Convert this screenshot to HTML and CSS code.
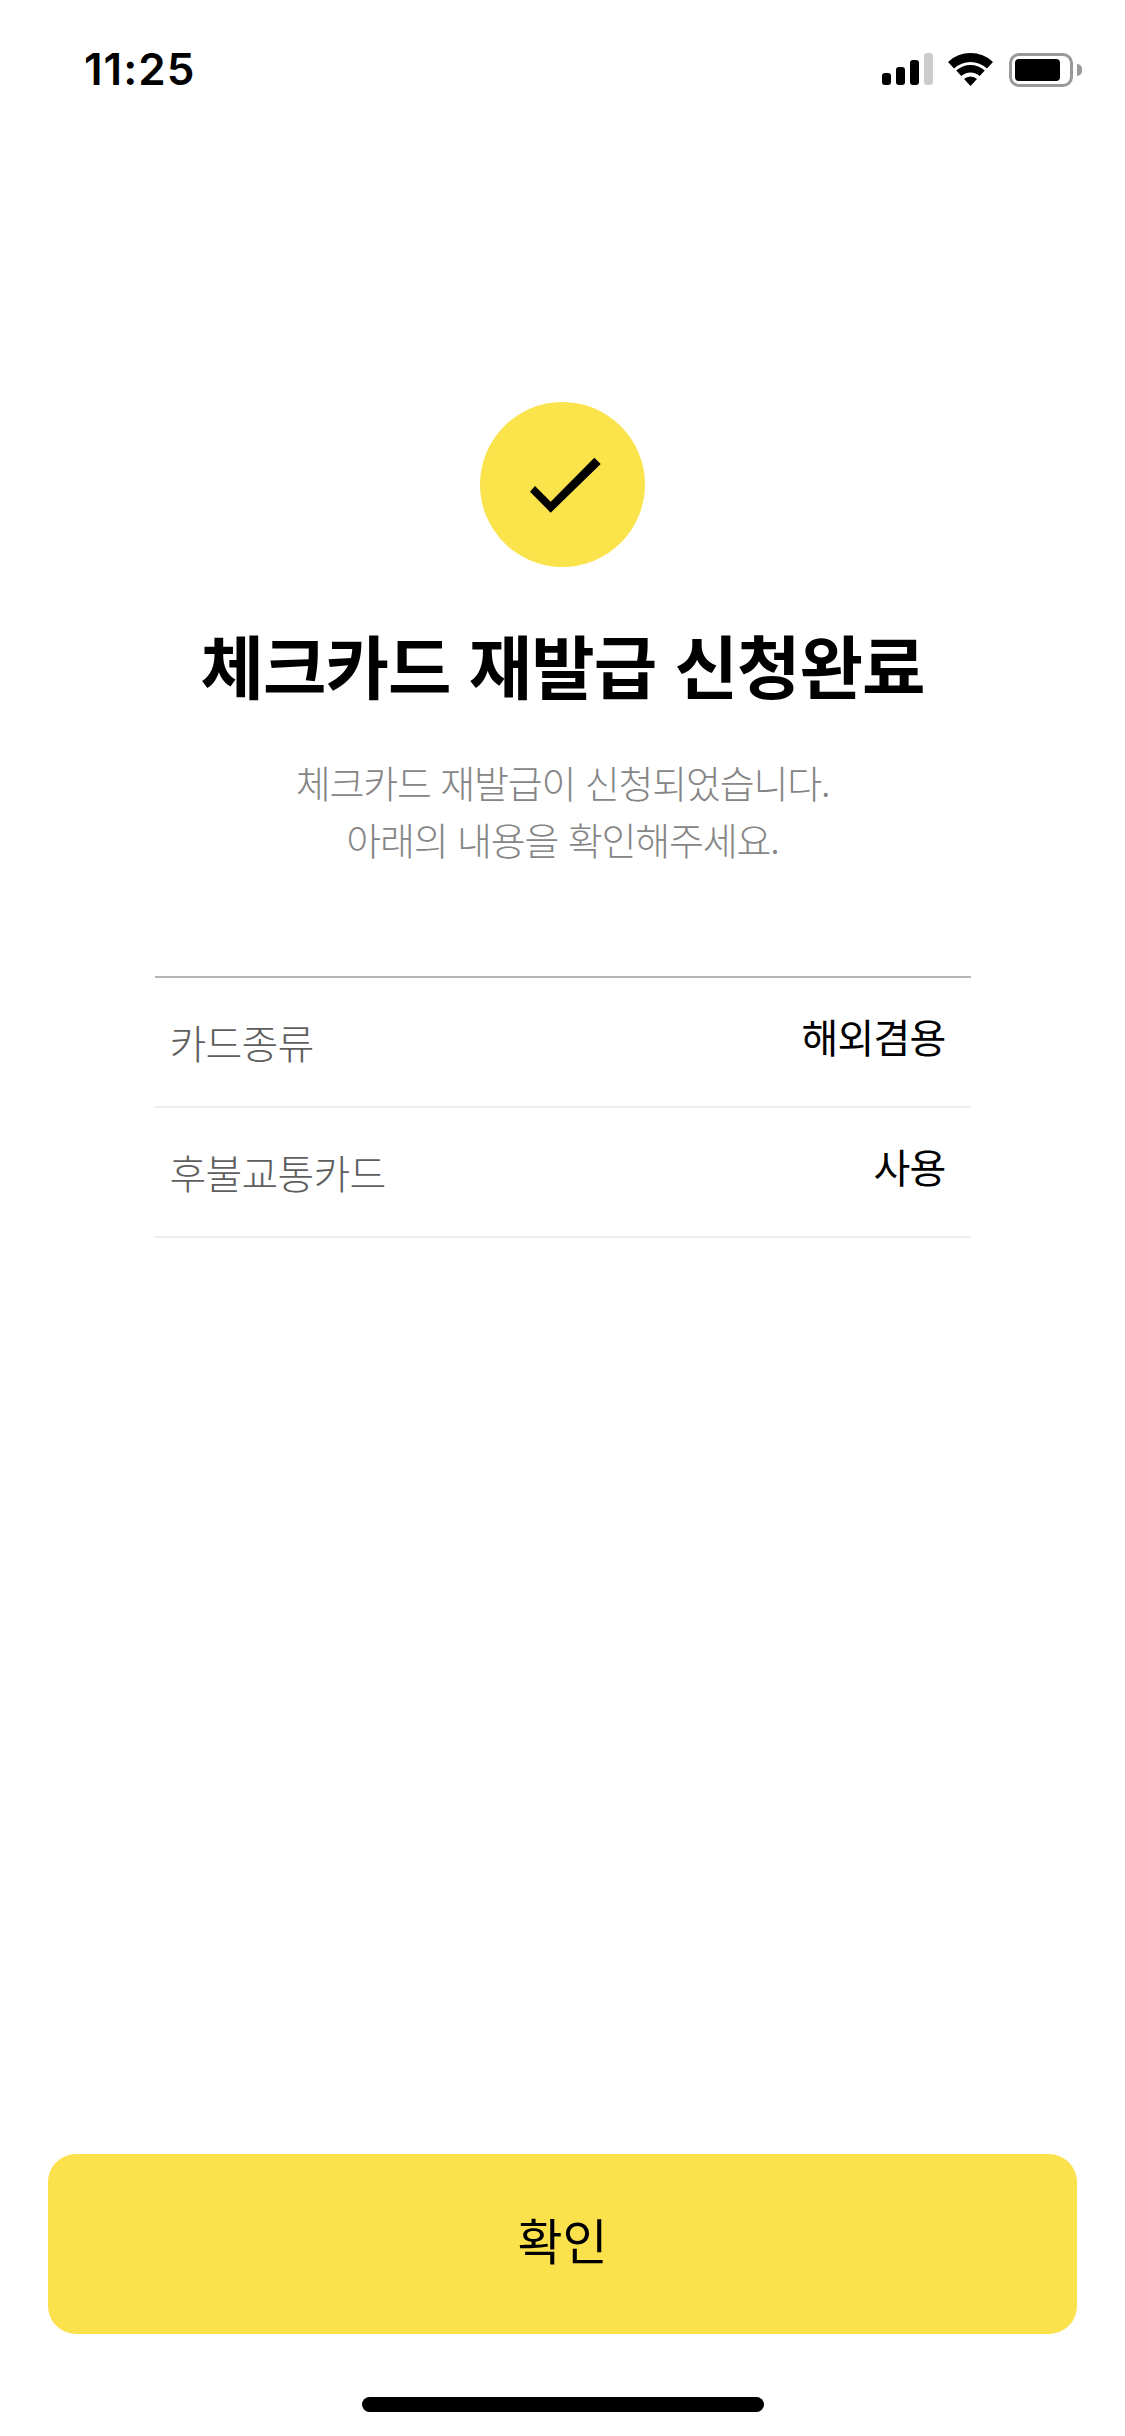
FILE: index.html
```html
<!DOCTYPE html>
<html lang="ko">
<head>
<meta charset="utf-8">
<title>체크카드 재발급 신청완료</title>
<link rel="stylesheet" href="styles.css">
</head>
<body>
<div class="screen">
  <header class="status">
    <span class="time">11:25</span>
    <div class="status-icons">
      <svg class="signal" width="51" height="32" viewBox="0 0 51 32" aria-hidden="true">
        <rect x="0" y="20" width="9" height="12" rx="3" fill="#000"/>
        <rect x="14" y="14" width="9" height="18" rx="3" fill="#000"/>
        <rect x="28" y="7" width="9" height="25" rx="3" fill="#000"/>
        <rect x="42" y="0" width="9" height="32" rx="3" fill="#ccc"/>
      </svg>
      <svg class="wifi" width="45" height="33" viewBox="0 0 45 33" aria-hidden="true">
        <path d="M0 8.9 A33 33 0 0 1 45 8.9 L38.9 15.45 A24 24 0 0 0 6.1 15.45 Z" fill="#000"/>
        <path d="M8.2 17.6 A21 21 0 0 1 36.8 17.6 L31.7 23.1 A13.5 13.5 0 0 0 13.3 23.1 Z" fill="#000"/>
        <path d="M16 26 A9.5 9.5 0 0 1 29 26 L22.5 33 Z" fill="#000"/>
      </svg>
      <div class="battery">
        <div class="battery-body"><div class="battery-level"></div></div>
        <div class="battery-nub"></div>
      </div>
    </div>
  </header>

  <main class="content">
    <div class="check-circle">
      <svg class="check" width="71" height="57" viewBox="0 0 71 57" aria-hidden="true">
        <path d="M0 35.7 L5 30 L20.7 45.7 L64.3 1.7 L70.7 8 L20.7 56.7 Z" fill="#000"/>
      </svg>
    </div>
    <h1 class="title">체크카드 재발급 신청완료</h1>
    <p class="desc">체크카드 재발급이 신청되었습니다.<br>아래의 내용을 확인해주세요.</p>

    <dl class="info">
      <div class="info-row">
        <dt class="info-label">카드종류</dt>
        <dd class="info-value">해외겸용</dd>
      </div>
      <div class="info-row">
        <dt class="info-label">후불교통카드</dt>
        <dd class="info-value">사용</dd>
      </div>
    </dl>
  </main>

  <footer class="footer">
    <button class="confirm" type="button">확인</button>
    <div class="home-bar"></div>
  </footer>
</div>
</body>
</html>
```

FILE: styles.css
```css
* { box-sizing: border-box; }

html, body {
  margin: 0;
  padding: 0;
  background: #fff;
}

body {
  font-family: "Noto Sans CJK KR", "Noto Sans", sans-serif;
  color: #000;
}

.screen {
  width: 1125px;
  height: 2436px;
  display: flex;
  flex-direction: column;
  overflow: hidden;
}

.status {
  height: 120px;
  flex: none;
  padding: 52px 43px 0 84px;
  display: flex;
  justify-content: space-between;
  align-items: flex-start;
}

.time {
  font-family: Inter, "Liberation Sans", sans-serif;
  font-weight: 600;
  font-size: 44px;
  line-height: 34px;
  letter-spacing: 1px;
}

.status-icons {
  display: flex;
  align-items: flex-start;
  padding-top: 1px;
}

.signal { margin-right: 15px; display: block; }
.wifi { margin-right: 16px; display: block; }

.battery {
  display: flex;
  align-items: center;
  height: 34px;
}

.battery-body {
  width: 64px;
  height: 34px;
  border: 3px solid #999;
  border-radius: 10px;
  padding: 3px 0 0 3px;
}

.battery-level {
  width: 45px;
  height: 22px;
  background: #000;
  border-radius: 4px;
}

.battery-nub {
  width: 5px;
  height: 12px;
  margin-left: 4px;
  background: #999;
  border-radius: 0 5px 5px 0;
}

.content {
  flex: 1;
  display: flex;
  flex-direction: column;
  align-items: center;
  padding-top: 282px;
}

.check-circle {
  width: 165px;
  height: 165px;
  border-radius: 50%;
  background: #fbe34c;
  display: flex;
  align-items: center;
  justify-content: center;
}

.check { margin-left: 5px; }

.title {
  margin: 51px 0 0;
  font-size: 69px;
  font-weight: 700;
  line-height: 92px;
  letter-spacing: -1px;
  color: #000;
}

.desc {
  margin: 43px 0 0;
  text-align: center;
  font-size: 38px;
  font-weight: 300;
  line-height: 57px;
  letter-spacing: -1.2px;
  color: #858585;
}

.info {
  width: 816px;
  margin: 109px 0 0;
  border-top: 2px solid #b5b5b5;
}

.info-row {
  height: 130px;
  padding: 31px 15px 0;
  display: flex;
  justify-content: space-between;
  align-items: flex-start;
  border-bottom: 2px solid #eee;
}

.info-label {
  margin: 6px 0 0;
  font-size: 40px;
  font-weight: 300;
  line-height: 54px;
  letter-spacing: -0.8px;
  color: #5e5e5e;
}

.info-value {
  margin: 0 10px 0 0;
  font-size: 40px;
  font-weight: 400;
  line-height: 54px;
  letter-spacing: -0.8px;
  color: #000;
}

.footer {
  flex: none;
  display: flex;
  flex-direction: column;
  align-items: center;
  padding: 0 48px 24px;
}

.confirm {
  width: 100%;
  height: 180px;
  border: 0;
  border-radius: 28px;
  background: #fbe14b;
  color: #000;
  font-family: inherit;
  font-size: 49px;
  font-weight: 400;
  padding: 0 0 12px;
}

.home-bar {
  width: 402px;
  height: 15px;
  margin-top: 63px;
  border-radius: 8px;
  background: #000;
}
```
